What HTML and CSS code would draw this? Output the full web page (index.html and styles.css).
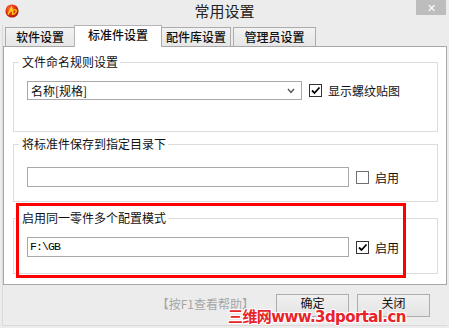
FILE: index.html
```html
<!DOCTYPE html>
<html lang="zh-CN">
<head>
    <meta charset="UTF-8">
    <title>常用设置</title>
    <link rel="stylesheet" href="styles.css">
</head>
<body>
    <div class="window">
        <div class="titlebar">
            <svg class="app-icon" width="14" height="14" viewBox="0 0 14 14">
                <defs>
                    <radialGradient id="ball" cx="0.4" cy="0.35" r="0.7">
                        <stop offset="0" stop-color="#ff7a3a"/>
                        <stop offset="0.6" stop-color="#e02a10"/>
                        <stop offset="1" stop-color="#a01808"/>
                    </radialGradient>
                </defs>
                <circle cx="7" cy="7" r="6.6" fill="url(#ball)"/>
                <path d="M3 10.5 L6.5 3.5 L8 10" fill="none" stroke="#ffd21e" stroke-width="1.4"/>
                <path d="M4 8 C7 6 10 5 11.5 6.5 C11 9 9 10.5 7 10.5" fill="none" stroke="#ffd21e" stroke-width="1.2"/>
            </svg>
            <div class="title">常用设置</div>
            <div class="close">✕</div>
        </div>

        <div class="client">
            <div class="tabs">
                <div class="tab t1">软件设置</div>
                <div class="tab active t2">标准件设置</div>
                <div class="tab t3">配件库设置</div>
                <div class="tab t4">管理员设置</div>
            </div>

            <div class="panel">
                <div class="group g1">
                    <span class="group-title">文件命名规则设置</span>
                    <div class="row r1">
                        <div class="combo">
                            <span>名称[规格]</span>
                            <svg class="chevron" width="8" height="6" viewBox="0 0 8 6">
                                <path d="M1 1 L4 4.5 L7 1" fill="none" stroke="#555" stroke-width="1.4"/>
                            </svg>
                        </div>
                        <label class="check">
                            <span class="box checked">
                                <svg width="11" height="11" viewBox="0 0 11 11"><path d="M2 5.5 L4.5 8 L9.5 2.5" fill="none" stroke="#000" stroke-width="1.8"/></svg>
                            </span>
                            <span>显示螺纹贴图</span>
                        </label>
                    </div>
                </div>

                <div class="group g2">
                    <span class="group-title">将标准件保存到指定目录下</span>
                    <div class="row r2">
                        <div class="field"></div>
                        <label class="check">
                            <span class="box"></span>
                            <span>启用</span>
                        </label>
                    </div>
                </div>

                <div class="group g3">
                    <span class="group-title">启用同一零件多个配置模式</span>
                    <div class="row r3">
                        <div class="field mono">F:\GB</div>
                        <label class="check">
                            <span class="box checked">
                                <svg width="11" height="11" viewBox="0 0 11 11"><path d="M2 5.5 L4.5 8 L9.5 2.5" fill="none" stroke="#000" stroke-width="1.8"/></svg>
                            </span>
                            <span>启用</span>
                        </label>
                    </div>
                </div>
            </div>

            <div class="footer">
                <span class="help">【按F1查看帮助】</span>
                <button class="btn">确定</button>
                <button class="btn">关闭</button>
            </div>
        </div>

        <div class="highlight"></div>
        <div class="watermark">三维网www.3dportal.cn</div>
    </div>
</body>
</html>
```

FILE: styles.css
```css
body {
    margin: 0;
    font-family: "Noto Sans CJK SC", "Liberation Sans", sans-serif;
    font-size: 12px;
    color: #111;
    background: #ececec;
}
.window {
    position: relative;
    width: 449px;
    height: 328px;
    background: #ececec;
    overflow: hidden;
}
.titlebar {
    height: 25px;
    display: flex;
    align-items: center;
    position: relative;
}
.app-icon {
    margin-left: 5px;
    margin-top: -4px;
}
.title {
    position: absolute;
    left: 0;
    right: 0;
    top: 1px;
    text-align: center;
    font-size: 15px;
    line-height: 20px;
    color: #222;
}
.close {
    position: absolute;
    right: 3px;
    top: 0;
    width: 30px;
    height: 15px;
    background: #bdbdbd;
    color: #fff;
    font-size: 11px;
    line-height: 15px;
    text-align: center;
}
.client {
    margin: 0 2px;
    border-left: 1px solid #dadada;
    border-bottom: 1px solid #dadada;
}
.tabs {
    display: flex;
    align-items: flex-end;
    height: 21px;
    padding-left: 2px;
    position: relative;
    z-index: 1;
}
.tab {
    height: 19px;
    box-sizing: border-box;
    border: 1px solid #acacac;
    border-bottom: none;
    background: linear-gradient(#f2f2f2, #e6e6e6);
    text-align: center;
    line-height: 18px;
    font-weight: 500;
}
.t1 { width: 70px; }
.t2 { width: 88px; }
.t3 { width: 70px; }
.t4 { width: 83px; margin-left: 2px; }
.tab.active {
    height: 22px;
    margin-bottom: -1px;
    background: #fff;
    border-color: #b4b4b4;
    line-height: 18px;
    margin-left: -1px;
    margin-right: -1px;
}
.panel {
    height: 239px;
    box-sizing: border-box;
    border: 1px solid #a8a8a8;
    background: #fff;
    padding: 15px 0 0 9px;
}
.group {
    width: 425px;
    box-sizing: border-box;
    border: 1px solid #dcdcdc;
    padding-left: 13px;
}
.g1 { height: 70px; }
.g2 { height: 58px; margin-top: 12px; }
.g3 { height: 56px; margin-top: 16px; }
.group-title {
    display: block;
    width: max-content;
    margin: -9px 0 0 -8px;
    padding: 0 2px 0 3px;
    background: #fff;
    line-height: 16px;
}
.row {
    display: flex;
    align-items: center;
}
.r1 { margin-top: 11px; }
.r2 { margin-top: 15px; }
.r3 { margin-top: 11px; }
.combo {
    width: 275px;
    height: 19px;
    box-sizing: border-box;
    border: 1px solid #a9a9a9;
    display: flex;
    align-items: center;
    justify-content: space-between;
    padding: 0 6px 0 3px;
    line-height: 17px;
}
.field {
    width: 322px;
    height: 20px;
    box-sizing: border-box;
    border: 1px solid #a9a9a9;
    padding-left: 2px;
    line-height: 18px;
}
.mono {
    font-family: "Liberation Mono", monospace;
    font-size: 11.5px;
    letter-spacing: -0.9px;
    color: #000;
}
.check {
    display: flex;
    align-items: center;
    gap: 6px;
    margin-left: 7px;
}
.box {
    width: 13px;
    height: 13px;
    box-sizing: border-box;
    border: 1px solid #707070;
    background: #fff;
    display: flex;
    align-items: center;
    justify-content: center;
}
.box.checked {
    border-color: #333;
}
.footer {
    height: 40px;
    display: flex;
    align-items: flex-start;
    justify-content: flex-end;
    padding: 9px 17px 0 0;
    box-sizing: border-box;
}
.help {
    color: #a6a6a6;
    line-height: 19px;
    margin-right: 14px;
}
.btn {
    width: 73px;
    height: 23px;
    margin-left: 8px;
    border: 1px solid #adadad;
    background: linear-gradient(#f0f0f0, #e3e3e3);
    font-family: "Noto Sans CJK SC", sans-serif;
    font-size: 12px;
    line-height: 14px;
    color: #111;
    padding: 0 0 5px 0;
}
.highlight {
    position: absolute;
    left: 16px;
    top: 203px;
    width: 390px;
    height: 75px;
    box-sizing: border-box;
    border: 3px solid #ff0000;
}
.watermark {
    position: absolute;
    left: 228px;
    top: 309px;
    font-family: "DejaVu Sans", "Noto Sans CJK SC", sans-serif;
    font-weight: bold;
    font-size: 15px;
    line-height: 16px;
    letter-spacing: -0.6px;
    color: #e8242a;
    text-shadow: 1px 0 #fff, -1px 0 #fff, 0 1px #fff, 0 -1px #fff,
        1px 1px #fff, -1px -1px #fff, 1px -1px #fff, -1px 1px #fff;
}
```
